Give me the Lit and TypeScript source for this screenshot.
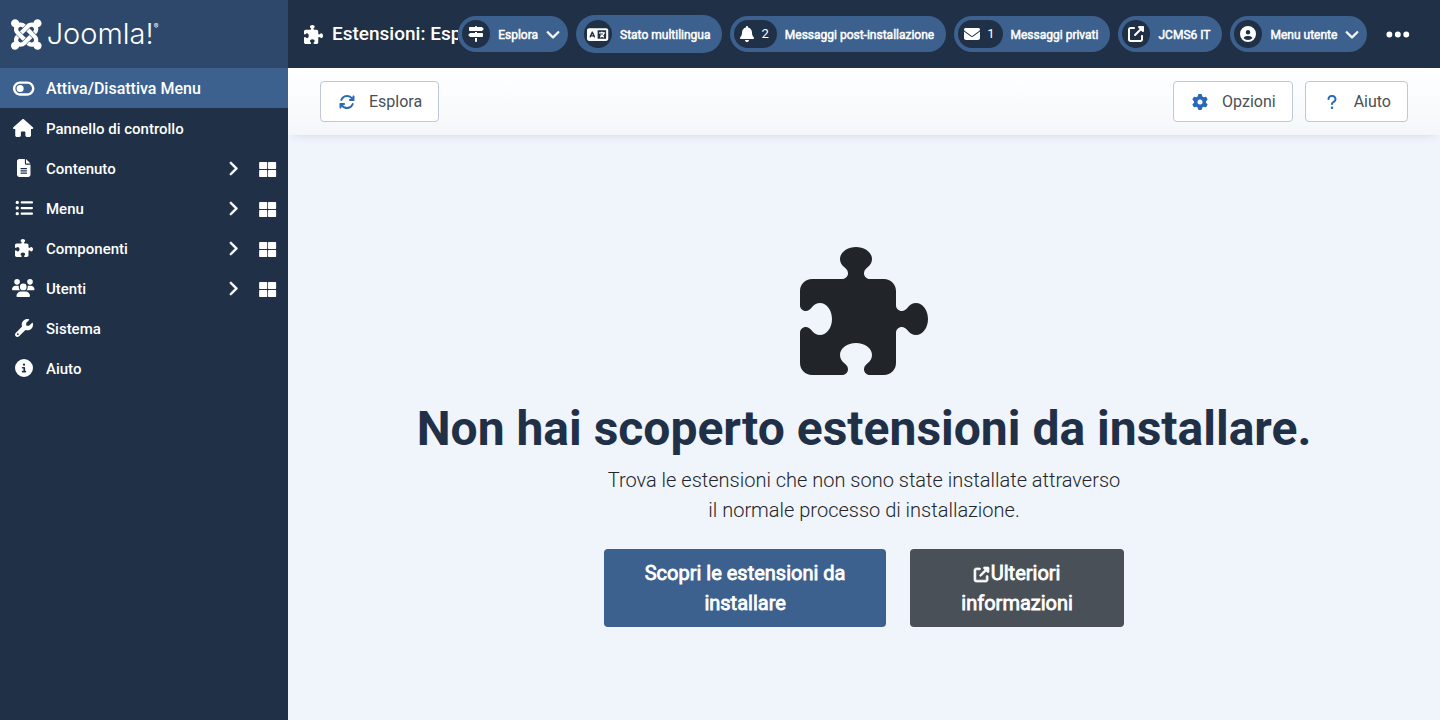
import { LitElement, html, svg, css } from "lit";
import { customElement, property } from "lit/decorators.js";

interface Glyph {
  w: number;
  h: number;
  d: string;
}

const GLYPHS: Record<string, Glyph> = {
  puzzle: { w: 512, h: 512, d: "M192 104.8c0-9.2-5.8-17.3-13.2-22.8C167.2 73.3 160 61.3 160 48c0-26.5 28.7-48 64-48s64 21.5 64 48c0 13.3-7.2 25.3-18.8 34c-7.4 5.5-13.2 13.6-13.2 22.8c0 12.8 10.4 23.2 23.2 23.2l56.8 0c26.5 0 48 21.5 48 48l0 56.8c0 12.8 10.4 23.2 23.2 23.2c9.2 0 17.3-5.8 22.8-13.2c8.7-11.6 20.7-18.8 34-18.8c26.5 0 48 28.7 48 64s-21.5 64-48 64c-13.3 0-25.3-7.2-34-18.8c-5.5-7.4-13.6-13.2-22.8-13.2c-12.8 0-23.2 10.4-23.2 23.2L384 464c0 26.5-21.5 48-48 48l-56.8 0c-12.8 0-23.2-10.4-23.2-23.2c0-9.2 5.8-17.3 13.2-22.8c11.6-8.7 18.8-20.7 18.8-34c0-26.5-28.7-48-64-48s-64 21.5-64 48c0 13.3 7.2 25.3 18.8 34c7.4 5.5 13.2 13.6 13.2 22.8c0 12.8-10.4 23.2-23.2 23.2L48 512c-26.5 0-48-21.5-48-48L0 343.2C0 330.4 10.4 320 23.2 320c9.2 0 17.3 5.8 22.8 13.2C54.7 344.8 66.7 352 80 352c26.5 0 48-28.7 48-64s-21.5-64-48-64c-13.3 0-25.3 7.2-34 18.8C40.5 250.2 32.4 256 23.2 256C10.4 256 0 245.6 0 232.8L0 176c0-26.5 21.5-48 48-48l120.8 0c12.8 0 23.2-10.4 23.2-23.2z" },
  house: { w: 576, h: 512, d: "M575.8 255.5c0 18-15 32.1-32 32.1l-32 0 .7 160.2c0 2.7-.2 5.4-.5 8.1l0 16.2c0 22.1-17.9 40-40 40l-16 0c-1.1 0-2.2 0-3.3-.1c-1.4 .1-2.8 .1-4.2 .1L416 512l-24 0c-22.1 0-40-17.9-40-40l0-24 0-64c0-17.7-14.3-32-32-32l-64 0c-17.7 0-32 14.3-32 32l0 64 0 24c0 22.1-17.9 40-40 40l-24 0-31.9 0c-1.5 0-3-.1-4.5-.2c-1.2 .1-2.4 .2-3.6 .2l-16 0c-22.1 0-40-17.9-40-40l0-112c0-.9 0-1.9 .1-2.8l0-69.7-32 0c-18 0-32-14-32-32.1c0-9 3-17 10-24L266.4 8c7-7 15-8 22-8s15 2 21 7L564.8 231.5c8 7 12 15 11 24z" },
  file: { w: 384, h: 512, d: "M64 0C28.7 0 0 28.7 0 64L0 448c0 35.3 28.7 64 64 64l256 0c35.3 0 64-28.7 64-64l0-288-128 0c-17.7 0-32-14.3-32-32L224 0 64 0zM256 0l0 128 128 0L256 0zM112 256l160 0c8.8 0 16 7.2 16 16s-7.2 16-16 16l-160 0c-8.8 0-16-7.2-16-16s7.2-16 16-16zm0 64l160 0c8.8 0 16 7.2 16 16s-7.2 16-16 16l-160 0c-8.8 0-16-7.2-16-16s7.2-16 16-16zm0 64l160 0c8.8 0 16 7.2 16 16s-7.2 16-16 16l-160 0c-8.8 0-16-7.2-16-16s7.2-16 16-16z" },
  list: { w: 512, h: 512, d: "M64 144a48 48 0 1 0 0-96 48 48 0 1 0 0 96zM192 64c-17.7 0-32 14.3-32 32s14.3 32 32 32l288 0c17.7 0 32-14.3 32-32s-14.3-32-32-32L192 64zm0 160c-17.7 0-32 14.3-32 32s14.3 32 32 32l288 0c17.7 0 32-14.3 32-32s-14.3-32-32-32l-288 0zm0 160c-17.7 0-32 14.3-32 32s14.3 32 32 32l288 0c17.7 0 32-14.3 32-32s-14.3-32-32-32l-288 0zM64 464a48 48 0 1 0 0-96 48 48 0 1 0 0 96zm48-208a48 48 0 1 0 -96 0 48 48 0 1 0 96 0z" },
  users: { w: 640, h: 512, d: "M144 0a80 80 0 1 1 0 160A80 80 0 1 1 144 0zM512 0a80 80 0 1 1 0 160A80 80 0 1 1 512 0zM0 298.7C0 239.8 47.8 192 106.7 192l42.7 0c15.9 0 31 3.5 44.6 9.7c-1.3 7.2-1.9 14.7-1.9 22.3c0 38.2 16.8 72.5 43.3 96c-.2 0-.4 0-.7 0L21.3 320C9.6 320 0 310.4 0 298.7zM405.3 320c-.2 0-.4 0-.7 0c26.6-23.5 43.3-57.8 43.3-96c0-7.6-.7-15-1.9-22.3c13.6-6.3 28.7-9.7 44.6-9.7l42.7 0C592.2 192 640 239.8 640 298.7c0 11.8-9.6 21.3-21.3 21.3l-213.3 0zM224 224a96 96 0 1 1 192 0 96 96 0 1 1 -192 0zM128 485.3C128 411.7 187.7 352 261.3 352l117.3 0C452.3 352 512 411.7 512 485.3c0 14.7-11.9 26.7-26.7 26.7l-330.7 0c-14.7 0-26.7-11.9-26.7-26.7z" },
  wrench: { w: 512, h: 512, d: "M352 320c88.4 0 160-71.6 160-160c0-15.3-2.2-30.1-6.2-44.2c-3.1-10.8-16.4-13.2-24.3-5.3l-76.8 76.8c-3 3-7.1 4.7-11.3 4.7L336 192c-8.8 0-16-7.2-16-16l0-57.4c0-4.2 1.7-8.3 4.7-11.3l76.8-76.8c7.9-7.9 5.4-21.2-5.3-24.3C382.1 2.2 367.3 0 352 0C263.6 0 192 71.6 192 160c0 19.1 3.4 37.5 9.5 54.5L19.9 396.1C7.2 408.8 0 426.1 0 444.1C0 481.6 30.4 512 67.9 512c18 0 35.3-7.2 48-19.9L297.5 310.5c17 6.2 35.4 9.5 54.5 9.5zM80 408a24 24 0 1 1 0 48 24 24 0 1 1 0-48z" },
  info: { w: 512, h: 512, d: "M256 512A256 256 0 1 0 256 0a256 256 0 1 0 0 512zM216 336l24 0 0-64-24 0c-13.3 0-24-10.7-24-24s10.7-24 24-24l48 0c13.3 0 24 10.7 24 24l0 88 8 0c13.3 0 24 10.7 24 24s-10.7 24-24 24l-80 0c-13.3 0-24-10.7-24-24s10.7-24 24-24zm40-208a32 32 0 1 1 0 64 32 32 0 1 1 0-64z" },
  toggle: { w: 576, h: 512, d: "M384 128c70.7 0 128 57.3 128 128s-57.3 128-128 128l-192 0c-70.7 0-128-57.3-128-128s57.3-128 128-128l192 0zM576 256c0-106-86-192-192-192L192 64C86 64 0 150 0 256S86 448 192 448l192 0c106 0 192-86 192-192zM192 352a96 96 0 1 0 0-192 96 96 0 1 0 0 192z" },
  tiles: { w: 512, h: 512, d: "M24 32h204a20 20 0 0 1 20 20v168a20 20 0 0 1-20 20H24a20 20 0 0 1-20-20V52a20 20 0 0 1 20-20zM292 32h204a20 20 0 0 1 20 20v168a20 20 0 0 1-20 20H292a20 20 0 0 1-20-20V52a20 20 0 0 1 20-20zM24 272h204a20 20 0 0 1 20 20v168a20 20 0 0 1-20 20H24a20 20 0 0 1-20-20V292a20 20 0 0 1 20-20zM292 272h204a20 20 0 0 1 20 20v168a20 20 0 0 1-20 20H292a20 20 0 0 1-20-20V292a20 20 0 0 1 20-20z" },
  right: { w: 320, h: 512, d: "M310.6 233.4c12.5 12.5 12.5 32.8 0 45.3l-192 192c-12.5 12.5-32.8 12.5-45.3 0s-12.5-32.8 0-45.3L242.7 256 73.4 86.6c-12.5-12.5-12.5-32.8 0-45.3s32.8-12.5 45.3 0l192 192z" },
  down: { w: 512, h: 512, d: "M233.4 406.6c12.5 12.5 32.8 12.5 45.3 0l192-192c12.5-12.5 12.5-32.8 0-45.3s-32.8-12.5-45.3 0L256 338.7 86.6 169.4c-12.5-12.5-32.8-12.5-45.3 0s-12.5 32.8 0 45.3l192 192z" },
  signs: { w: 512, h: 512, d: "M224 32L64 32C46.3 32 32 46.3 32 64l0 64c0 17.7 14.3 32 32 32l377.4 0c4.2 0 8.3-1.7 11.3-4.7l48-48c6.2-6.2 6.2-16.4 0-22.6l-48-48c-3-3-7.1-4.7-11.3-4.7L288 32c0-17.7-14.3-32-32-32s-32 14.3-32 32zM480 256c0-17.7-14.3-32-32-32l-160 0 0-32-64 0 0 32L70.6 224c-4.2 0-8.3 1.7-11.3 4.7l-48 48c-6.2 6.2-6.2 16.4 0 22.6l48 48c3 3 7.1 4.7 11.3 4.7L448 352c17.7 0 32-14.3 32-32l0-64zM288 480l0-96-64 0 0 96c0 17.7 14.3 32 32 32s32-14.3 32-32z" },
  language: { w: 640, h: 512, d: "M0 128C0 92.7 28.7 64 64 64l192 0 48 0 16 0 256 0c35.3 0 64 28.7 64 64l0 256c0 35.3-28.7 64-64 64l-256 0-16 0-48 0L64 448c-35.3 0-64-28.7-64-64L0 128zm320 0l0 256 256 0 0-256-256 0zM178.3 175.9c-3.2-7.2-10.4-11.9-18.3-11.9s-15.1 4.7-18.3 11.9l-64 144c-4.5 10.1 .1 21.9 10.2 26.4s21.9-.1 26.4-10.2l8.9-20.1 73.6 0 8.9 20.1c4.5 10.1 16.3 14.6 26.4 10.2s14.6-16.3 10.2-26.4l-64-144zM160 233.2L179 276l-38 0 19-42.8zM448 164c11 0 20 9 20 20l0 4 44 0 16 0c11 0 20 9 20 20s-9 20-20 20l-2 0-1.6 4.5c-8.9 24.4-22.4 46.6-39.6 65.4c.9 .6 1.8 1.1 2.7 1.6l18.9 11.3c9.5 5.7 12.5 18 6.9 27.4s-18 12.5-27.4 6.9l-18.9-11.3c-4.5-2.7-8.8-5.5-13.1-8.5c-10.6 7.5-21.9 14-34 19.4l-3.6 1.6c-10.1 4.5-21.9-.1-26.4-10.2s.1-21.9 10.2-26.4l3.6-1.6c6.4-2.9 12.6-6.1 18.5-9.8l-12.2-12.2c-7.8-7.8-7.8-20.5 0-28.3s20.5-7.8 28.3 0l14.6 14.6 .5 .5c12.4-13.1 22.5-28.3 29.8-45L448 228l-72 0c-11 0-20-9-20-20s9-20 20-20l52 0 0-4c0-11 9-20 20-20z" },
  bell: { w: 448, h: 512, d: "M224 0c-17.7 0-32 14.3-32 32l0 19.2C119 66 64 130.6 64 208l0 18.8c0 47-17.3 92.4-48.5 127.6l-7.4 8.3c-8.4 9.4-10.4 22.9-5.3 34.4S19.4 416 32 416l384 0c12.6 0 24-7.4 29.2-18.9s3.1-25-5.3-34.4l-7.4-8.3C401.3 319.2 384 273.9 384 226.8l0-18.8c0-77.4-55-142-128-156.8L256 32c0-17.7-14.3-32-32-32zm45.3 493.3c12-12 18.7-28.3 18.7-45.3l-64 0-64 0c0 17 6.7 33.3 18.7 45.3s28.3 18.7 45.3 18.7s33.3-6.7 45.3-18.7z" },
  envelope: { w: 512, h: 512, d: "M48 64C21.5 64 0 85.5 0 112c0 15.1 7.1 29.3 19.2 38.4L236.8 313.6c11.4 8.5 27 8.5 38.4 0L492.8 150.4c12.1-9.1 19.2-23.3 19.2-38.4c0-26.5-21.5-48-48-48L48 64zM0 176L0 384c0 35.3 28.7 64 64 64l384 0c35.3 0 64-28.7 64-64l0-208L294.4 339.2c-22.8 17.1-54 17.1-76.8 0L0 176z" },
  external: { w: 512, h: 512, d: "M352 0c-12.9 0-24.6 7.8-29.6 19.8s-2.2 25.7 6.9 34.9L370.7 96 201.4 265.4c-12.5 12.5-12.5 32.8 0 45.3s32.8 12.5 45.3 0L416 141.3l41.4 41.4c9.2 9.2 22.9 11.9 34.9 6.9s19.8-16.6 19.8-29.6l0-128c0-17.7-14.3-32-32-32L352 0zM80 32C35.8 32 0 67.8 0 112L0 432c0 44.2 35.8 80 80 80l320 0c44.2 0 80-35.8 80-80l0-112c0-17.7-14.3-32-32-32s-32 14.3-32 32l0 112c0 8.8-7.2 16-16 16L80 448c-8.8 0-16-7.2-16-16l0-320c0-8.8 7.2-16 16-16l112 0c17.7 0 32-14.3 32-32s-14.3-32-32-32L80 32z" },
  user: { w: 512, h: 512, d: "M399 384.2C376.9 345.8 335.4 320 288 320l-64 0c-47.4 0-88.9 25.8-111 64.2c35.2 39.2 86.2 63.8 143 63.8s107.8-24.7 143-63.8zM0 256a256 256 0 1 1 512 0A256 256 0 1 1 0 256zm256 16a72 72 0 1 0 0-144 72 72 0 1 0 0 144z" },
  refresh: { w: 512, h: 512, d: "M105.1 202.6c7.7-21.8 20.2-42.3 37.8-59.8c62.5-62.5 163.8-62.5 226.3 0L386.3 160 352 160c-17.7 0-32 14.3-32 32s14.3 32 32 32l111.5 0c0 0 0 0 0 0l.4 0c17.7 0 32-14.3 32-32l0-112c0-17.7-14.3-32-32-32s-32 14.3-32 32l0 35.2L414.4 97.6c-87.5-87.5-229.3-87.5-316.8 0C73.2 122 55.6 150.7 44.8 181.4c-5.9 16.7 2.9 34.9 19.5 40.8s34.9-2.9 40.8-19.5zM39 289.3c-5 1.5-9.8 4.2-13.7 8.2c-4 4-6.7 8.8-8.1 14c-.3 1.2-.6 2.5-.8 3.8c-.3 1.7-.4 3.4-.4 5.1L16 432c0 17.7 14.3 32 32 32s32-14.3 32-32l0-35.1 17.6 17.5c0 0 0 0 0 0c87.5 87.4 229.3 87.4 316.7 0c24.4-24.4 42.1-53.1 52.9-83.8c5.9-16.7-2.9-34.9-19.5-40.8s-34.9 2.9-40.8 19.5c-7.7 21.8-20.2 42.3-37.8 59.8c-62.5 62.5-163.8 62.5-226.3 0l-.1-.1L125.6 352l34.4 0c17.7 0 32-14.3 32-32s-14.3-32-32-32L48.4 288c-1.6 0-3.2 .1-4.8 .3s-3.1 .5-4.6 1z" },
  gear: { w: 512, h: 512, d: "M495.9 166.6c3.2 8.7 .5 18.4-6.4 24.6l-43.3 39.4c1.1 8.3 1.7 16.8 1.7 25.4s-.6 17.1-1.7 25.4l43.3 39.4c6.9 6.2 9.6 15.9 6.4 24.6c-4.4 11.9-9.7 23.3-15.8 34.3l-4.7 8.1c-6.6 11-14 21.4-22.1 31.2c-5.9 7.2-15.7 9.6-24.5 6.8l-55.7-17.7c-13.4 10.3-28.2 18.9-44 25.4l-12.5 57.1c-2 9.1-9 16.3-18.2 17.8c-13.8 2.3-28 3.5-42.5 3.5s-28.7-1.2-42.5-3.5c-9.2-1.5-16.2-8.7-18.2-17.8l-12.5-57.1c-15.8-6.5-30.6-15.1-44-25.4L83.1 425.9c-8.8 2.8-18.6 .3-24.5-6.8c-8.1-9.8-15.5-20.2-22.1-31.2l-4.7-8.1c-6.1-11-11.4-22.4-15.8-34.3c-3.2-8.7-.5-18.4 6.4-24.6l43.3-39.4C64.6 273.1 64 264.6 64 256s.6-17.1 1.7-25.4L22.4 191.2c-6.9-6.2-9.6-15.9-6.4-24.6c4.4-11.9 9.7-23.3 15.8-34.3l4.7-8.1c6.6-11 14-21.4 22.1-31.2c5.9-7.2 15.7-9.6 24.5-6.8l55.7 17.7c13.4-10.3 28.2-18.9 44-25.4l12.5-57.1c2-9.1 9-16.3 18.2-17.8C227.3 1.2 241.5 0 256 0s28.7 1.2 42.5 3.5c9.2 1.5 16.2 8.7 18.2 17.8l12.5 57.1c15.8 6.5 30.6 15.1 44 25.4l55.7-17.7c8.8-2.8 18.6-.3 24.5 6.8c8.1 9.8 15.5 20.2 22.1 31.2l4.7 8.1c6.1 11 11.4 22.4 15.8 34.3zM256 336a80 80 0 1 0 0-160 80 80 0 1 0 0 160z" },
  question: { w: 320, h: 512, d: "M80 160c0-35.3 28.7-64 64-64l32 0c35.3 0 64 28.7 64 64l0 3.6c0 21.8-11.1 42.1-29.4 53.8l-42.2 27.1c-25.2 16.2-40.4 44.1-40.4 74l0 1.4c0 17.7 14.3 32 32 32s32-14.3 32-32l0-1.4c0-8.2 4.2-15.8 11-20.2l42.2-27.1c36.6-23.6 58.8-64.1 58.8-107.7l0-3.6c0-70.7-57.3-128-128-128l-32 0C73.3 32 16 89.3 16 160c0 17.7 14.3 32 32 32s32-14.3 32-32zm80 320a40 40 0 1 0 0-80 40 40 0 1 0 0 80z" },
  dots: { w: 448, h: 512, d: "M8 256a56 56 0 1 1 112 0A56 56 0 1 1 8 256zm160 0a56 56 0 1 1 112 0 56 56 0 1 1 -112 0zm216-56a56 56 0 1 1 0 112 56 56 0 1 1 0-112z" },
  joomla: { w: 448, h: 512, d: "M.6 92.1C.6 58.8 27.4 32 60.4 32c30 0 54.5 21.9 59.2 50.2 32.6-7.6 67.1.6 96.5 30l-44.3 44.3c-20.5-20.5-42.6-16.3-55.4-3.5-14.3 14.3-14.3 37.9 0 52.2l99.5 99.5-44 44.3c-87.7-87.2-49.7-49.7-99.8-99.7-26.8-26.5-35-64.8-24.8-98.9C20.4 144.6.6 120.7.6 92.1zm129.5 116.4l44.3 44.3c10-10 89.7-89.7 99.7-99.8 14.3-14.3 37.6-14.3 51.9 0 12.8 12.8 17 35-3.5 55.4l44 44.3c31.2-31.2 38.5-67.6 28.9-101.2 29.2-4.1 51.9-29.2 51.9-59.5 0-33.2-26.8-60.1-59.8-60.1-30.3 0-55.4 22.5-59.5 51.6-33.8-9.9-71.7-1.5-98.3 25.1-18.3 19.1-71.1 71.5-99.6 99.9zm266.3 152.2c8.2-32.7-.9-68.5-26.3-93.9-11.8-12.2 5 4.7-99.5-99.7l-44.3 44.3 99.7 99.7c14.3 14.3 14.3 37.6 0 51.9-12.8 12.8-35 17-55.4-3.5l-44 44.3c27.6 30.2 68 38.8 102.7 28 5.5 27.4 29.7 48.1 58.9 48.1 33 0 59.8-26.8 59.8-60.1 0-30.2-22.5-55-51.6-59.1zm-84.3-53.1l-44-44.3c-87 86.4-50.4 50.4-99.7 99.8-14.3 14.3-37.6 14.3-51.9 0-13.1-13.4-16.9-35.3 3.2-55.4l-44-44.3c-30.2 30.2-38 65.2-29.5 98.3-26.7 6-46.2 29.9-46.2 58.2C0 453.2 26.8 480 59.8 480c28.6 0 52.5-19.8 58.6-46.7 32.7 8.2 68.5-.6 94.2-26 32.1-32 12.2-12.4 99.5-99.7z" },
};

/** Solid glyph, sized by the height of its own box; `heavy` thickens its outline. */
@customElement("ui-icon")
export class UiIcon extends LitElement {
  @property() name = "";
  @property({ type: Boolean }) heavy = false;

  static styles = css`
    :host {
      display: inline-flex;
      height: 16px;
      flex: none;
    }
    .glyph {
      height: 100%;
      width: auto;
      fill: currentColor;
      overflow: visible;
    }
    .heavy {
      stroke: currentColor;
      stroke-width: 24;
    }
  `;

  render() {
    const g = GLYPHS[this.name];
    return html`<svg class="glyph ${this.heavy ? "heavy" : ""}" viewBox="0 0 ${g.w} ${g.h}" aria-hidden="true">
      ${svg`<path d=${g.d}></path>`}
    </svg>`;
  }
}

@customElement("brand-logo")
export class BrandLogo extends LitElement {
  static styles = css`
    :host {
      display: flex;
      align-items: center;
      height: 68px;
      padding-left: 11px;
      background: #2e486b;
      color: #fff;
    }
    .mark {
      height: 35px;
    }
    .word {
      margin-left: 5px;
      font: 300 29px/30px Inter, sans-serif;
    }
    .reg {
      align-self: flex-start;
      padding-top: 22px;
      font: 400 7px/10px Inter, sans-serif;
    }
  `;

  render() {
    return html`
      <ui-icon class="mark" name="joomla"></ui-icon>
      <span class="word">Joomla!</span><span class="reg">®</span>
    `;
  }
}

interface MenuEntry {
  icon: string;
  label: string;
  children?: boolean;
}

interface Pill {
  icon: string;
  label: string;
  count?: number;
  menu?: boolean;
  roomy?: boolean;
}

const MENU: MenuEntry[] = [
  { icon: "house", label: "Pannello di controllo" },
  { icon: "file", label: "Contenuto", children: true },
  { icon: "list", label: "Menu", children: true },
  { icon: "puzzle", label: "Componenti", children: true },
  { icon: "users", label: "Utenti", children: true },
  { icon: "wrench", label: "Sistema" },
  { icon: "info", label: "Aiuto" },
];

const PILLS: Pill[] = [
  { icon: "signs", label: "Esplora", menu: true },
  { icon: "language", label: "Stato multilingua", roomy: true },
  { icon: "bell", label: "Messaggi post-installazione", count: 2 },
  { icon: "envelope", label: "Messaggi privati", count: 1 },
  { icon: "external", label: "JCMS6 IT" },
  { icon: "user", label: "Menu utente", menu: true },
];

@customElement("app-root")
export class AppRoot extends LitElement {
  static styles = css`
    :host {
      display: grid;
      grid-template-columns: 288px minmax(0, 1fr);
      min-height: 100vh;
      background: #f0f4fb;
      color: #22262a;
      font-family: Roboto, sans-serif;
      font-size: 16px;
      line-height: 24px;
    }
    * {
      box-sizing: border-box;
    }
    a {
      color: inherit;
      text-decoration: none;
    }
    button {
      font: inherit;
      color: inherit;
      border: 0;
      background: none;
      padding: 0;
      cursor: pointer;
    }

    .sidebar {
      z-index: 1;
      background: #1f3047;
      color: #fff;
      font-size: 15px;
      font-weight: 500;
    }
    .row {
      display: flex;
      align-items: center;
      width: 100%;
      height: 40px;
      padding: 0 12px;
      text-align: left;
    }
    .toggle {
      background: #3d618f;
      font-size: 16px;
    }
    .link {
      display: flex;
      align-items: center;
      flex: 1;
      gap: 11px;
    }
    .label {
      padding-top: 2px;
    }
    .slot {
      display: flex;
      justify-content: center;
      width: 23px;
    }
    .menu {
      list-style: none;
      margin: 0;
      padding: 0;
    }
    .link ui-icon {
      height: 18px;
    }
    .toggle ui-icon {
      height: 19px;
    }
    .extras {
      display: flex;
      align-items: center;
      gap: 22px;
    }
    .extras ui-icon {
      height: 15px;
    }
    .extras .link {
      padding-top: 2px;
    }
    .extras .link ui-icon {
      height: 17px;
    }

    .page {
      display: flex;
      flex-direction: column;
      min-width: 0;
    }
    .header {
      display: flex;
      align-items: center;
      height: 68px;
      padding: 0 30px 0 16px;
      background: #1f3047;
      color: #fff;
    }
    .title {
      display: flex;
      align-items: center;
      gap: 9px;
      flex: 1 1 0;
      min-width: 0;
      margin: 0;
      overflow: hidden;
      white-space: nowrap;
      font-size: 19px;
      font-weight: 500;
    }
    .title ui-icon {
      height: 19px;
    }
    .pills {
      display: flex;
      align-items: center;
      gap: 8px;
      flex: none;
    }
    .pill {
      display: flex;
      align-items: center;
      gap: 8px;
      height: 36px;
      padding: 0 12px 0 4px;
      border-radius: 19px;
      background: #3d618f;
      font-size: 12px;
      white-space: nowrap;
    }
    .pill.has-menu {
      padding-right: 8px;
    }
    .pill.roomy {
      height: 38px;
      padding-left: 8px;
    }
    .caption {
      padding-top: 1px;
      -webkit-text-stroke: 0.04em currentColor;
    }
    .badge {
      display: flex;
      align-items: center;
      justify-content: center;
      gap: 7px;
      min-width: 28px;
      height: 28px;
      border-radius: 14px;
      background: #1f3047;
      font-size: 13px;
    }
    .badge.counted {
      padding: 0 8px 0 6px;
    }
    .roomy .badge ui-icon {
      height: 17px;
    }
    .pill > ui-icon {
      height: 14px;
    }
    .more {
      display: flex;
      margin-left: 19px;
    }
    .more ui-icon {
      height: 27px;
    }

    .toolbar {
      display: flex;
      align-items: center;
      gap: 12px;
      height: 67px;
      padding: 0 32px;
      background: linear-gradient(#fff, #f4f7fa);
      box-shadow: 0 4px 10px -6px #b9c8e4;
    }
    .tool {
      display: flex;
      align-items: center;
      gap: 12px;
      height: 41px;
      padding: 0 16px;
      border: 1px solid #bfc9d6;
      border-radius: 4px;
      background: #fff;
      color: #495057;
    }
    .tool .slot {
      width: 20px;
      color: #2a69b8;
    }
    .spacer {
      flex: 1;
    }

    .empty {
      display: flex;
      flex-direction: column;
      align-items: center;
      padding: 112px 32px 48px;
      text-align: center;
    }
    .empty > ui-icon {
      height: 128px;
      color: #212529;
    }
    .empty h1 {
      margin: 25px 0 7px;
      color: #1f3047;
      font-size: 48px;
      line-height: 58px;
      font-weight: 700;
    }
    .body {
      width: 50%;
      padding: 0 12px;
    }
    .lead {
      margin: 0 0 24px;
      font-size: 20px;
      line-height: 30px;
      font-weight: 300;
    }
    .actions {
      display: flex;
      justify-content: center;
      gap: 24px;
    }
    .cta {
      padding: 9px 24px;
      border-radius: 4px;
      background: #3d618f;
      color: #fff;
      font-size: 20px;
      line-height: 30px;
      -webkit-text-stroke: 0.04em currentColor;
    }
    .cta.dark {
      background: #495057;
    }
    .cta ui-icon {
      height: 15px;
      margin-right: 2px;
      vertical-align: -2px;
    }
  `;

  private entry(e: MenuEntry) {
    return html`<li class="row">
      <a class="link" href="#"
        ><span class="slot"><ui-icon name=${e.icon}></ui-icon></span><span class="label">${e.label}</span></a
      >
      ${e.children
        ? html`<span class="extras">
            <ui-icon name="right" heavy></ui-icon>
            <a class="link" href="#" aria-label="${e.label}: pannello"><ui-icon name="tiles"></ui-icon></a>
          </span>`
        : ""}
    </li>`;
  }

  private pill(p: Pill) {
    return html`<button
      type="button"
      class="pill ${p.menu ? "has-menu" : ""} ${p.roomy ? "roomy" : ""}"
    >
      <span class="badge ${p.count ? "counted" : ""}">
        <ui-icon name=${p.icon}></ui-icon>${p.count ? html`<span>${p.count}</span>` : ""}
      </span>
      <span class="caption">${p.label}</span>
      ${p.menu ? html`<ui-icon name="down" heavy></ui-icon>` : ""}
    </button>`;
  }

  render() {
    return html`
      <aside class="sidebar">
        <brand-logo></brand-logo>
        <button type="button" class="row toggle">
          <span class="link"
            ><span class="slot"><ui-icon name="toggle"></ui-icon></span><span class="label">Attiva/Disattiva Menu</span></span
          >
        </button>
        <nav>
          <ul class="menu">
            ${MENU.map((e) => this.entry(e))}
          </ul>
        </nav>
      </aside>
      <div class="page">
        <header class="header">
          <h2 class="title"><ui-icon name="puzzle"></ui-icon><span>Estensioni: Esplora</span></h2>
          <div class="pills">${PILLS.map((p) => this.pill(p))}</div>
          <button type="button" class="more" aria-label="Altro"><ui-icon name="dots"></ui-icon></button>
        </header>
        <div class="toolbar">
          <button type="button" class="tool"><span class="slot"><ui-icon name="refresh"></ui-icon></span>Esplora</button>
          <span class="spacer"></span>
          <button type="button" class="tool"><span class="slot"><ui-icon name="gear"></ui-icon></span>Opzioni</button>
          <button type="button" class="tool"><span class="slot"><ui-icon name="question"></ui-icon></span>Aiuto</button>
        </div>
        <main class="empty">
          <ui-icon name="puzzle"></ui-icon>
          <h1>Non hai scoperto estensioni da installare.</h1>
          <div class="body">
            <p class="lead">Trova le estensioni che non sono state installate attraverso il normale processo di installazione.</p>
            <div class="actions">
              <button type="button" class="cta">Scopri le estensioni da installare</button>
              <a class="cta dark" href="#"><ui-icon name="external" heavy></ui-icon>Ulteriori informazioni</a>
            </div>
          </div>
        </main>
      </div>
    `;
  }
}
